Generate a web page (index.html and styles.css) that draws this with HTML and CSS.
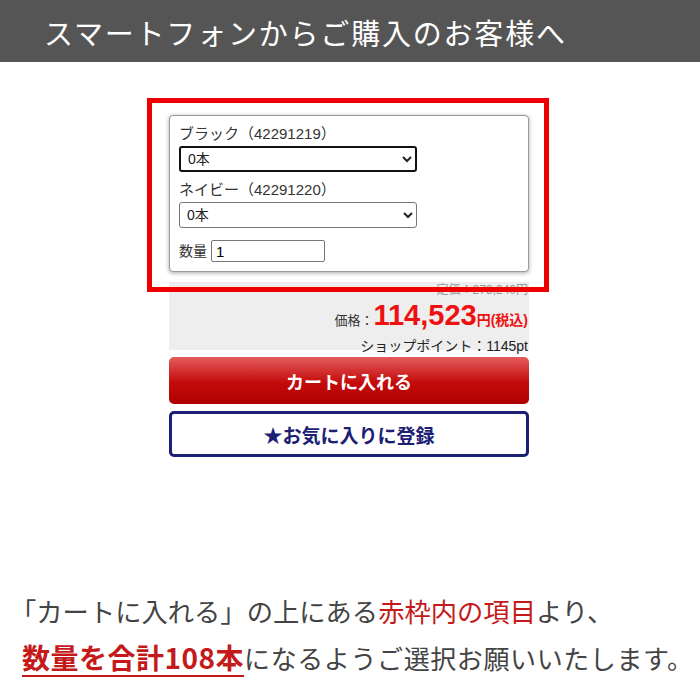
FILE: index.html
```html
<!DOCTYPE html>
<html lang="ja">
<head>
    <meta charset="UTF-8">
    <meta name="viewport" content="width=device-width, initial-scale=1.0">
    <title>スマートフォンからご購入のお客様へ</title>
    <link rel="stylesheet" href="styles.css">
</head>
<body>
    <div class="page-title">スマートフォンからご購入のお客様へ</div>

    <div class="cart-area">
        <div class="red-frame"></div>

        <div class="variation-box">
            <label class="var-label">ブラック（42291219）</label>
            <select class="var-select focused">
                <option>0本</option>
            </select>
            <label class="var-label second">ネイビー（42291220）</label>
            <select class="var-select">
                <option>0本</option>
            </select>
            <div class="qty-row">
                <span>数量</span>
                <input type="text" class="qty-input" value="1">
            </div>
        </div>

        <div class="price-box">
            <div class="list-price">定価：273,240円</div>
            <div class="sale-price">価格：<span class="price-num">114,523</span><span class="price-unit">円(税込)</span></div>
            <div class="point">ショップポイント：1145pt</div>
        </div>

        <button class="cart-btn">カートに入れる</button>
        <button class="fav-btn">★お気に入りに登録</button>
    </div>

    <div class="notice">
        <p class="notice-line first">「カートに入れる」の上にある<span class="red">赤枠内の項目</span>より、</p>
        <p class="notice-line second"><span class="red strong">数量を合計108本</span>になるようご選択お願いいたします。</p>
    </div>
</body>
</html>
```

FILE: styles.css
```css
body {
    margin: 0;
    padding: 0;
    background: #FFFFFF;
    color: #333333;
    font-family: "Liberation Sans", "Noto Sans CJK JP", sans-serif;
}

.page-title {
    height: 62px;
    background: #555555;
    color: #FFFFFF;
    font-family: "Noto Sans CJK JP", sans-serif;
    font-size: 29px;
    letter-spacing: 1.8px;
    line-height: 64px;
    padding-left: 44px;
    box-sizing: border-box;
    overflow: hidden;
}

.cart-area {
    width: 360px;
    margin: 53px 0 0 169px;
    position: relative;
    display: flex;
    flex-direction: column;
}

/* 赤枠は上に重ねる */
.red-frame {
    position: absolute;
    left: -22px;
    top: -17px;
    width: 402px;
    height: 194px;
    border: 5px solid #EE0000;
    box-sizing: border-box;
    z-index: 2;
}

.variation-box {
    border: 1px solid #999999;
    border-radius: 4px;
    box-shadow: 0 1px 4px rgba(0, 0, 0, 0.35);
    padding: 8px 9px 8px 9px;
    display: flex;
    flex-direction: column;
    align-items: flex-start;
    font-size: 14px;
    background: #FFFFFF;
}

.var-label {
    font-size: 15px;
    line-height: 20px;
    color: #333333;
}

.var-label.second {
    margin-top: 8px;
}

.var-select {
    width: 238px;
    height: 26px;
    margin-top: 2px;
    padding: 0 3px;
    font-family: "Liberation Sans", "Noto Sans CJK JP", sans-serif;
    font-size: 14px;
    color: #222222;
    background: #FFFFFF;
    border: 1px solid #767676;
    border-radius: 3px;
}

.var-select.focused {
    border: 2px solid #111111;
}

.qty-row {
    margin-top: 11px;
    display: flex;
    align-items: center;
    gap: 4px;
    line-height: 24px;
}

.qty-input {
    width: 114px;
    height: 22px;
    box-sizing: border-box;
    border: 1px solid #767676;
    border-radius: 2px;
    padding: 0 4px;
    font-family: "Liberation Sans", "Noto Sans CJK JP", sans-serif;
    font-size: 15px;
}

.price-box {
    margin-top: 10px;
    background: #EEEEEE;
    text-align: right;
    padding-right: 1px;
    height: 68px;
}

.list-price {
    font-size: 12px;
    color: #999999;
    line-height: 16px;
}

.sale-price {
    font-size: 13px;
    line-height: 34px;
    color: #333333;
}

.price-num {
    font-size: 29px;
    font-weight: bold;
    color: #EE1111;
}

.price-unit {
    font-size: 14px;
    font-weight: bold;
    color: #EE1111;
}

.point {
    font-size: 14px;
    line-height: 16px;
    color: #222222;
}

.cart-btn,
.fav-btn {
    width: 100%;
    font-family: "Noto Sans CJK JP", sans-serif;
    font-weight: bold;
    cursor: pointer;
}

.cart-btn {
    margin-top: 7px;
    height: 47px;
    border: none;
    border-radius: 5px;
    font-size: 18px;
    color: #FFFFFF;
    background: linear-gradient(#E35C5C, #C40A0A 55%, #B00000);
}

.fav-btn {
    margin-top: 7px;
    height: 46px;
    border: 3px solid #1C2075;
    border-radius: 5px;
    font-size: 19px;
    background: #FFFFFF;
    color: #1C2075;
}

.notice {
    margin-top: 130px;
    font-family: "Noto Sans CJK JP", sans-serif;
    color: #444444;
}

.notice-line {
    margin: 0;
    line-height: 47px;
}

.notice-line.first {
    font-size: 26.3px;
    padding-left: 10px;
}

.notice-line.second {
    font-size: 26px;
    letter-spacing: 0.6px;
    padding-left: 22px;
}

.red {
    color: #C41A1A;
}

.strong {
    font-size: 28px;
    letter-spacing: 0.5px;
    font-weight: bold;
    text-decoration: underline;
    text-decoration-thickness: 2px;
    text-underline-offset: 6px;
}
```
